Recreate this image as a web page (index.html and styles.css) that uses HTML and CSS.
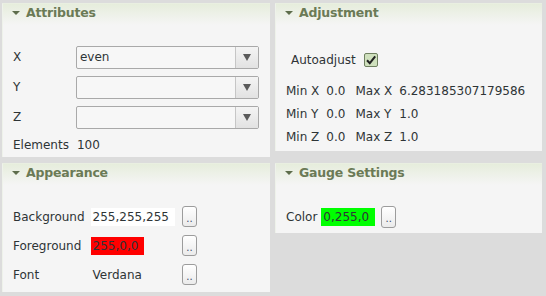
FILE: index.html
```html
<!DOCTYPE html>
<html>

<head>
    <meta name="viewport" content="width=device-width, initial-scale=1">
    <link rel="stylesheet" href="styles.css">
</head>

<body>
    <div class="board">
        <!-- left column -->
        <div class="panel attributes">
            <div class="panelHead"><span class="arrow"></span>Attributes</div>
            <div class="panelBody formGrid">
                <span class="lbl">X</span>
                <div class="combo"><span class="comboText">even</span><span class="comboBtn"><span class="tri"></span></span></div>
                <span class="lbl">Y</span>
                <div class="combo"><span class="comboText"></span><span class="comboBtn"><span class="tri"></span></span></div>
                <span class="lbl">Z</span>
                <div class="combo"><span class="comboText"></span><span class="comboBtn"><span class="tri"></span></span></div>
                <span class="lbl elements">Elements</span>
                <span class="lbl elements elVal">100</span>
            </div>
        </div>

        <div class="panel adjustment">
            <div class="panelHead"><span class="arrow"></span>Adjustment</div>
            <div class="panelBody">
                <div class="autoRow">
                    <span>Autoadjust</span>
                    <span class="check">
                        <svg width="14" height="14" viewBox="0 0 14 14">
                            <rect x="0.5" y="0.5" width="13" height="13" rx="1.5" fill="#cfe0bd" stroke="#6f8060"/>
                            <path d="M3 7.2 L5.8 10.2 L11.2 3.4" fill="none" stroke="#222" stroke-width="2"/>
                        </svg>
                    </span>
                </div>
                <div class="rangeGrid">
                    <span>Min X</span><span class="num">0.0</span><span>Max X</span><span>6.283185307179586</span>
                    <span>Min Y</span><span class="num">0.0</span><span>Max Y</span><span>1.0</span>
                    <span>Min Z</span><span class="num">0.0</span><span>Max Z</span><span>1.0</span>
                </div>
            </div>
        </div>

        <div class="panel appearance">
            <div class="panelHead"><span class="arrow"></span>Appearance</div>
            <div class="panelBody colorGrid">
                <span>Background</span>
                <span><span class="swatch" style="background:#ffffff">255,255,255</span></span>
                <button class="dots">..</button>
                <span>Foreground</span>
                <span><span class="swatch" style="background:#ff0000">255,0,0</span></span>
                <button class="dots">..</button>
                <span>Font</span>
                <span><span class="swatch">Verdana</span></span>
                <button class="dots">..</button>
            </div>
        </div>

        <div class="panel gauge">
            <div class="panelHead"><span class="arrow"></span>Gauge Settings</div>
            <div class="panelBody gaugeRow">
                <span>Color</span>
                <span class="swatch" style="background:#00ff00">0,255,0</span>
                <button class="dots">..</button>
            </div>
        </div>
    </div>
</body>

</html>
```

FILE: styles.css
```css
* {
    box-sizing: border-box;
}

body {
    margin: 0;
    background: #dcdcdc;
    font-family: "DejaVu Sans", sans-serif;
    font-size: 12px;
    color: #2e3436;
}

/* two columns of panels */
.board {
    display: grid;
    grid-template-columns: 268px 267px;
    grid-template-rows: 154px auto;
    column-gap: 5px;
    row-gap: 6px;
    align-items: start;
    padding: 3px 0 0 2px;
}

.panel {
    background: #f5f5f5;
    border-top: 1px solid #e9efe1;
    border-left: 1px solid #eef2ea;
}

.attributes {
    height: 154px;
}

.adjustment {
    height: 148px;
}

.appearance {
    height: 129px;
}

.gauge {
    height: 70px;
}

/* header strip with the collapse arrow */
.panelHead {
    height: 21px;
    display: flex;
    align-items: flex-start;
    padding: 1px 0 0 8px;
    line-height: 15px;
    font-weight: bold;
    font-size: 12.5px;
    letter-spacing: -0.2px;
    color: #6b7a56;
    background: linear-gradient(#e6eddc, #f5f5f5);
}

.arrow {
    width: 0;
    height: 0;
    border-left: 4px solid transparent;
    border-right: 4px solid transparent;
    border-top: 4px solid #5e6d4c;
    margin: 6px 6px 0 1px;
}

/* Attributes */
.formGrid {
    display: grid;
    grid-template-columns: auto 1fr;
    column-gap: 7px;
    row-gap: 7px;
    align-items: center;
    padding: 21px 11px 0 10px;
}

.formGrid .lbl {
    line-height: 23px;
}

.formGrid .elements {
    line-height: 18px;
    margin-top: 0;
}

.elVal {
    padding-left: 1px;
}

.combo {
    height: 23px;
    display: flex;
    border: 1px solid #a9a9a9;
    border-radius: 2px;
    background: #f7f7f7;
}

.comboText {
    flex: 1;
    padding-left: 3px;
    line-height: 21px;
}

.comboBtn {
    width: 23px;
    display: flex;
    align-items: center;
    justify-content: center;
    border-left: 1px solid #c6c6c6;
    background: linear-gradient(#f4f4f4, #e2e2e2);
}

.tri {
    width: 0;
    height: 0;
    border-left: 4px solid transparent;
    border-right: 4px solid transparent;
    border-top: 7px solid #5a5a5a;
}

/* Adjustment */
.adjustment .panelBody {
    padding: 24px 0 0 10px;
}

.autoRow {
    display: flex;
    align-items: center;
    gap: 8px;
    padding-left: 5px;
    height: 22px;
}

.check {
    display: flex;
}

.rangeGrid {
    display: grid;
    grid-template-columns: auto auto auto auto;
    justify-content: start;
    column-gap: 7px;
    row-gap: 8px;
    margin-top: 13px;
    line-height: 15px;
}

.rangeGrid .num {
    padding-right: 3px;
}

/* Appearance */
.colorGrid {
    display: grid;
    grid-template-columns: auto auto auto;
    justify-content: start;
    column-gap: 6px;
    row-gap: 8px;
    align-items: center;
    padding: 21px 0 0 10px;
}

.swatch {
    display: inline-block;
    padding: 0 6px 0 2px;
    line-height: 18px;
}

.dots {
    width: 15px;
    height: 21px;
    padding: 0;
    margin-left: 1px;
    font-family: "DejaVu Sans", sans-serif;
    font-size: 10px;
    color: #3a4a6a;
    border: 1px solid #9c9c9c;
    border-radius: 3px;
    background: linear-gradient(#ffffff, #ebebeb);
    line-height: 24px;
}

/* Gauge Settings */
.gaugeRow {
    display: flex;
    align-items: center;
    gap: 4px;
    padding: 21px 0 0 10px;
}

.gaugeRow .dots {
    margin-left: 2px;
    height: 22px;
}
```
